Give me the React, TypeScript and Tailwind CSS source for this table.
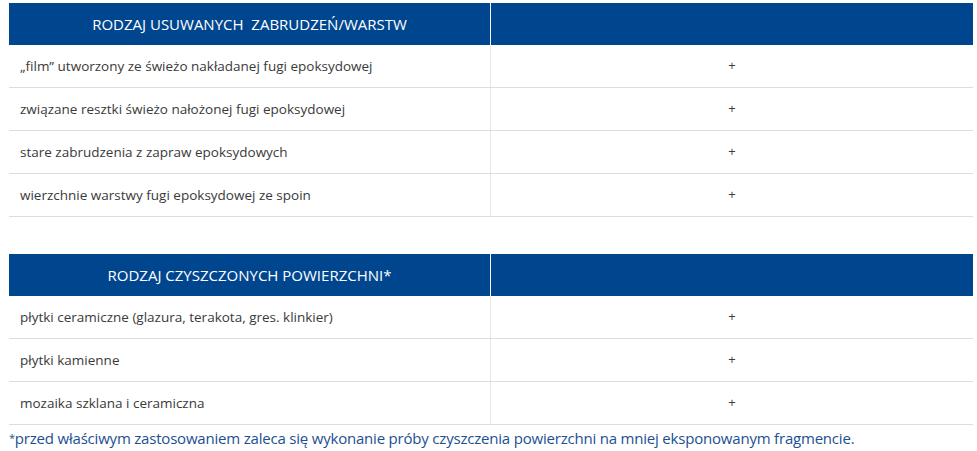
import React from "react";

const font = { fontFamily: '"Open Sans", "Noto Sans", sans-serif' };

function Section({ title, rows }: { title: string; rows: string[] }) {
  return (
    <div className="w-[964px]">
      <div className="grid grid-cols-[481px_1px_1fr] h-[42px] bg-[#00468f]">
        <div className="flex items-center justify-center text-white text-[15px] uppercase whitespace-pre">
          {title}
        </div>
        <div className="bg-white" />
        <div />
      </div>
      {rows.map((r, i) => (
        <div key={i} className="grid grid-cols-[481px_1px_1fr] h-[43px] border-b border-[#dddddd]">
          <div className="flex items-center pl-[11px] text-[13.5px] text-[#3a3a3a]">{r}</div>
          <div className="bg-[#e6e6e6]" />
          <div className="flex items-center justify-center text-[13px] text-[#3a3a3a]">+</div>
        </div>
      ))}
    </div>
  );
}

export default function App() {
  return (
    <div className="w-[977px] h-[451px] bg-white pl-[9px] pt-[3px]" style={font}>
      <Section
        title={"RODZAJ USUWANYCH  ZABRUDZEŃ/WARSTW"}
        rows={[
          "„film” utworzony ze świeżo nakładanej fugi epoksydowej",
          "związane resztki świeżo nałożonej fugi epoksydowej",
          "stare zabrudzenia z zapraw epoksydowych",
          "wierzchnie warstwy fugi epoksydowej ze spoin",
        ]}
      />
      <div className="h-[37px]" />
      <Section
        title="RODZAJ CZYSZCZONYCH POWIERZCHNI*"
        rows={[
          "płytki ceramiczne (glazura, terakota, gres. klinkier)",
          "płytki kamienne",
          "mozaika szklana i ceramiczna",
        ]}
      />
      <div className="pt-[3px] text-[15px] leading-[20px] text-[#1d4f91] tracking-[-0.2px]">
        <span className="align-top text-[11px]">*</span>przed właściwym zastosowaniem zaleca się wykonanie próby czyszczenia powierzchni na mniej eksponowanym fragmencie.
      </div>
    </div>
  );
}
